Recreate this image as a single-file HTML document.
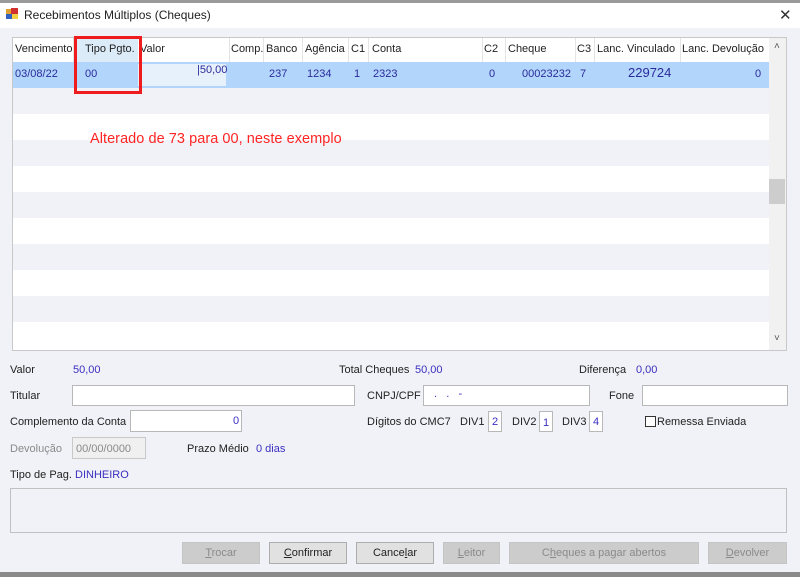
<!DOCTYPE html>
<html><head><meta charset="utf-8"><style>
*{margin:0;padding:0;box-sizing:border-box}
body{width:800px;height:577px;background:#f1f2f7;font-family:"Liberation Sans",sans-serif;font-size:11px;color:#222;position:relative;overflow:hidden}
.a{position:absolute;white-space:nowrap}
.b{color:#3a2fc0}
.in{position:absolute;background:#fff;border:1px solid #b8b8b8}
.btn{position:absolute;top:542px;height:22px;border:1px solid #adadad;background:#e1e1e1;text-align:center;line-height:20px;font-size:11px}
.dis{background:#cccccc;color:#8a8a8a;border-color:#c4c4c4}
.h{top:43px;height:16px}
.sep{position:absolute;top:38px;width:1px;height:24px;background:#e4e4e4}
.r{top:68px;color:#2a2a9a}
</style></head><body>
<div class="a" style="left:0;top:0;width:800px;height:3px;background:#9a9a9a"></div>
<div class="a" style="left:0;top:3px;width:800px;height:25px;background:#fff"></div>
<div class="a" style="left:6px;top:9px;width:6px;height:6px;background:#e0a030"></div>
<div class="a" style="left:11px;top:8px;width:7px;height:7px;background:#d03030"></div>
<div class="a" style="left:6px;top:14px;width:6px;height:5px;background:#3060c0"></div>
<div class="a" style="left:12px;top:14px;width:6px;height:5px;background:#f0d040"></div>
<div class="a" style="left:24px;top:8px;font-size:12px">Recebimentos Múltiplos (Cheques)</div>
<div class="a" style="left:779px;top:6px;font-size:15px;color:#333">✕</div>

<div class="a" style="left:12px;top:37px;width:775px;height:314px;background:#fff;border:1px solid #c8c8c8"></div>
<div class="a" style="left:13px;top:38px;width:756px;height:24px;background:#fff"></div>
<div class="a" style="left:75px;top:38px;width:63px;height:24px;background:#dcebf8"></div>
<div class="a" style="left:13px;top:62px;width:756px;height:26px;background:#b2d6fb"></div>
<div class="a" style="left:138px;top:64px;width:88px;height:22px;background:#e6f1fc"></div>
<div class="a" style="left:13px;top:88px;width:756px;height:26px;background:#f1f2f7"></div>
<div class="a" style="left:13px;top:140px;width:756px;height:26px;background:#f1f2f7"></div>
<div class="a" style="left:13px;top:192px;width:756px;height:26px;background:#f1f2f7"></div>
<div class="a" style="left:13px;top:244px;width:756px;height:26px;background:#f1f2f7"></div>
<div class="a" style="left:13px;top:296px;width:756px;height:26px;background:#f1f2f7"></div>
<div class="a" style="left:769px;top:38px;width:17px;height:312px;background:#f1f1f1"></div>
<div class="a" style="left:769px;top:179px;width:16px;height:25px;background:#cdcdcd"></div>
<div class="a" style="left:774px;top:41px;font-size:10px;color:#555">˄</div>
<div class="a" style="left:774px;top:333px;font-size:10px;color:#555">˅</div>
<div class="sep" style="left:73px"></div><div class="sep" style="left:229px"></div><div class="sep" style="left:263px"></div><div class="sep" style="left:302px"></div><div class="sep" style="left:348px"></div><div class="sep" style="left:368px"></div><div class="sep" style="left:482px"></div><div class="sep" style="left:505px"></div><div class="sep" style="left:575px"></div><div class="sep" style="left:594px"></div><div class="sep" style="left:680px"></div>
<div class="a h" style="left:15px">Vencimento</div>
<div class="a h" style="left:85px">Tipo Pgto.</div>
<div class="a h" style="left:140px">Valor</div>
<div class="a h" style="left:231px">Comp.</div>
<div class="a h" style="left:266px">Banco</div>
<div class="a h" style="left:305px">Agência</div>
<div class="a h" style="left:351px">C1</div>
<div class="a h" style="left:372px">Conta</div>
<div class="a h" style="left:484px">C2</div>
<div class="a h" style="left:508px">Cheque</div>
<div class="a h" style="left:577px">C3</div>
<div class="a h" style="left:597px">Lanc. Vinculado</div>
<div class="a h" style="left:682px">Lanc. Devolução</div>
<div class="a r" style="left:15px">03/08/22</div>
<div class="a r" style="left:85px">00</div>
<div class="a" style="left:197px;top:64px;color:#2a2a9a">|50,00</div>
<div class="a r" style="left:269px">237</div>
<div class="a r" style="left:307px">1234</div>
<div class="a r" style="left:354px">1</div>
<div class="a r" style="left:373px">2323</div>
<div class="a r" style="left:489px">0</div>
<div class="a r" style="left:522px">00023232</div>
<div class="a r" style="left:580px">7</div>
<div class="a" style="left:628px;top:65px;font-size:13px;color:#2a2a9a">229724</div>
<div class="a r" style="left:755px">0</div>
<div class="a" style="left:74px;top:36px;width:68px;height:58px;border:3px solid #ee1c1c"></div>
<div class="a" style="left:90px;top:131px;font-size:14.5px;color:#ff2424;letter-spacing:0.05px">Alterado de 73 para 00, neste exemplo</div>

<div class="a" style="left:10px;top:364px">Valor</div><div class="a b" style="left:73px;top:364px">50,00</div>
<div class="a" style="left:339px;top:364px">Total Cheques</div><div class="a b" style="left:415px;top:364px">50,00</div>
<div class="a" style="left:579px;top:364px">Diferença</div><div class="a b" style="left:636px;top:364px">0,00</div>
<div class="a" style="left:10px;top:390px">Titular</div><div class="in" style="left:72px;top:385px;width:283px;height:21px"></div>
<div class="a" style="left:367px;top:390px">CNPJ/CPF</div><div class="in" style="left:423px;top:385px;width:167px;height:21px"></div>
<div class="a b" style="left:434px;top:388px">.&nbsp;&nbsp;&nbsp;.&nbsp;&nbsp;&nbsp;-</div>
<div class="a" style="left:609px;top:390px">Fone</div><div class="in" style="left:642px;top:385px;width:146px;height:21px"></div>
<div class="a" style="left:10px;top:416px">Complemento da Conta</div><div class="in" style="left:130px;top:410px;width:112px;height:22px"></div>
<div class="a b" style="left:233px;top:415px">0</div>
<div class="a" style="left:367px;top:416px">Dígitos do CMC7</div>
<div class="a" style="left:460px;top:416px">DIV1</div><div class="in" style="left:488px;top:411px;width:14px;height:21px"></div><div class="a b" style="left:492px;top:416px">2</div>
<div class="a" style="left:512px;top:416px">DIV2</div><div class="in" style="left:539px;top:411px;width:14px;height:21px"></div><div class="a b" style="left:543px;top:417px">1</div>
<div class="a" style="left:562px;top:416px">DIV3</div><div class="in" style="left:589px;top:411px;width:14px;height:21px"></div><div class="a b" style="left:593px;top:416px">4</div>
<div class="a" style="left:645px;top:416px;width:11px;height:11px;border:1px solid #333;background:#fff"></div>
<div class="a" style="left:657px;top:416px">Remessa Enviada</div>
<div class="a" style="left:10px;top:443px;color:#8a8a8a">Devolução</div>
<div class="in" style="left:72px;top:437px;width:74px;height:22px;background:#f0f0f0;border-color:#c8c8c8"></div>
<div class="a" style="left:76px;top:443px;color:#8a8a8a">00/00/0000</div>
<div class="a" style="left:187px;top:443px">Prazo Médio</div><div class="a b" style="left:256px;top:443px">0 dias</div>
<div class="a" style="left:10px;top:469px">Tipo de Pag.</div><div class="a b" style="left:75px;top:469px">DINHEIRO</div>
<div class="a" style="left:10px;top:488px;width:777px;height:45px;border:1px solid #c0c0c0;background:#f1f2f7"></div>
<div class="btn dis" style="left:182px;width:78px"><u>T</u>rocar</div>
<div class="btn" style="left:269px;width:78px"><u>C</u>onfirmar</div>
<div class="btn" style="left:356px;width:78px">Cance<u>l</u>ar</div>
<div class="btn dis" style="left:443px;width:57px"><u>L</u>eitor</div>
<div class="btn dis" style="left:509px;width:190px">C<u>h</u>eques a pagar abertos</div>
<div class="btn dis" style="left:708px;width:79px"><u>D</u>evolver</div>
<div class="a" style="left:0;top:572px;width:800px;height:5px;background:#8a8a8a"></div>
</body></html>
